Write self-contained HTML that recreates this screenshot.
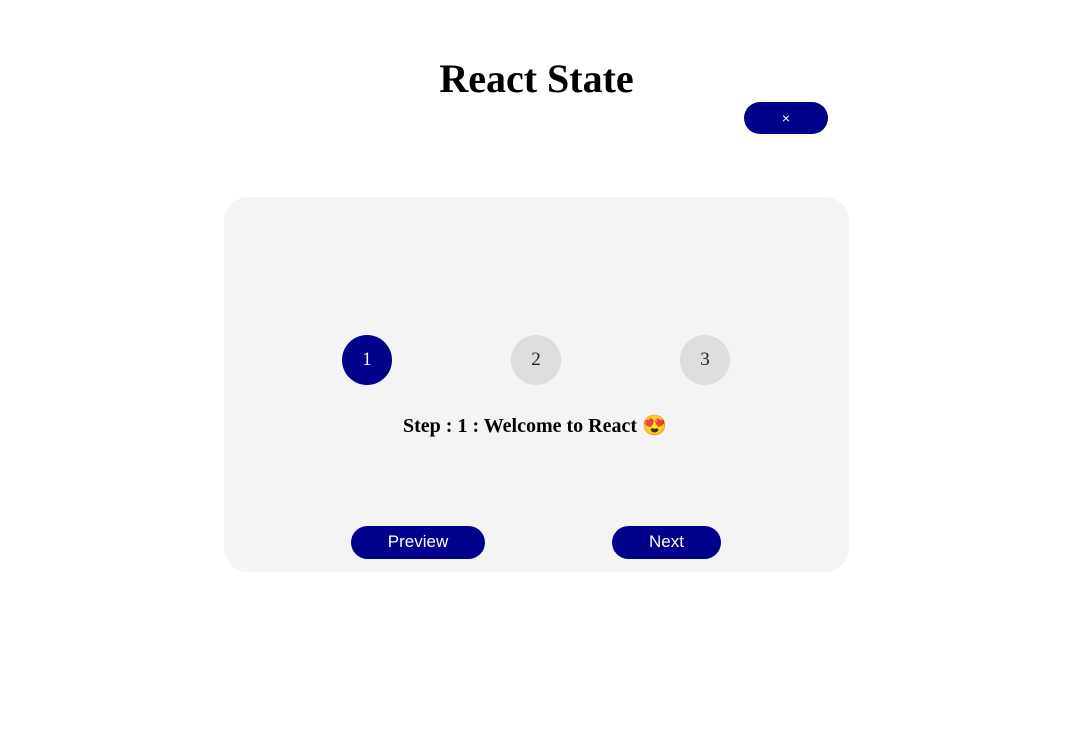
<!DOCTYPE html>
<html><head><style>
body{margin:0;width:1081px;height:756px;background:#fff;position:relative;font-family:"Liberation Serif",serif;}
.abs{position:absolute;}
h1{position:absolute;left:0;width:1073px;top:56px;margin:0;text-align:center;font-size:40px;font-weight:bold;line-height:46px;}
.btn{position:absolute;background:#00008b;color:#fff;border-radius:17px;font-family:"Liberation Sans",sans-serif;text-align:center;}
.card{position:absolute;left:224px;top:197px;width:625px;height:375px;background:#f4f4f4;border-radius:24px;}
.c{position:absolute;top:335px;width:50px;height:50px;border-radius:50%;background:#dddddd;text-align:center;line-height:50px;font-size:19px;color:#222;}
</style></head><body>
<h1>React State</h1>
<div class="btn" style="left:744px;top:102px;width:84px;height:32px;line-height:32px;font-size:14px;">×</div>
<div class="card"></div>
<div class="c" style="left:342px;background:#00008b;color:#fff;">1</div>
<div class="c" style="left:511px;">2</div>
<div class="c" style="left:680px;">3</div>
<div class="abs" style="left:403px;top:414px;font-size:20px;font-weight:bold;line-height:24px;white-space:nowrap;">Step : 1 : Welcome to React <span style="font-family:sans-serif">😍</span></div>
<div class="btn" style="left:351px;top:526px;width:134px;height:33px;line-height:31px;font-size:17px;">Preview</div>
<div class="btn" style="left:612px;top:526px;width:109px;height:33px;line-height:31px;font-size:17px;">Next</div>
</body></html>
